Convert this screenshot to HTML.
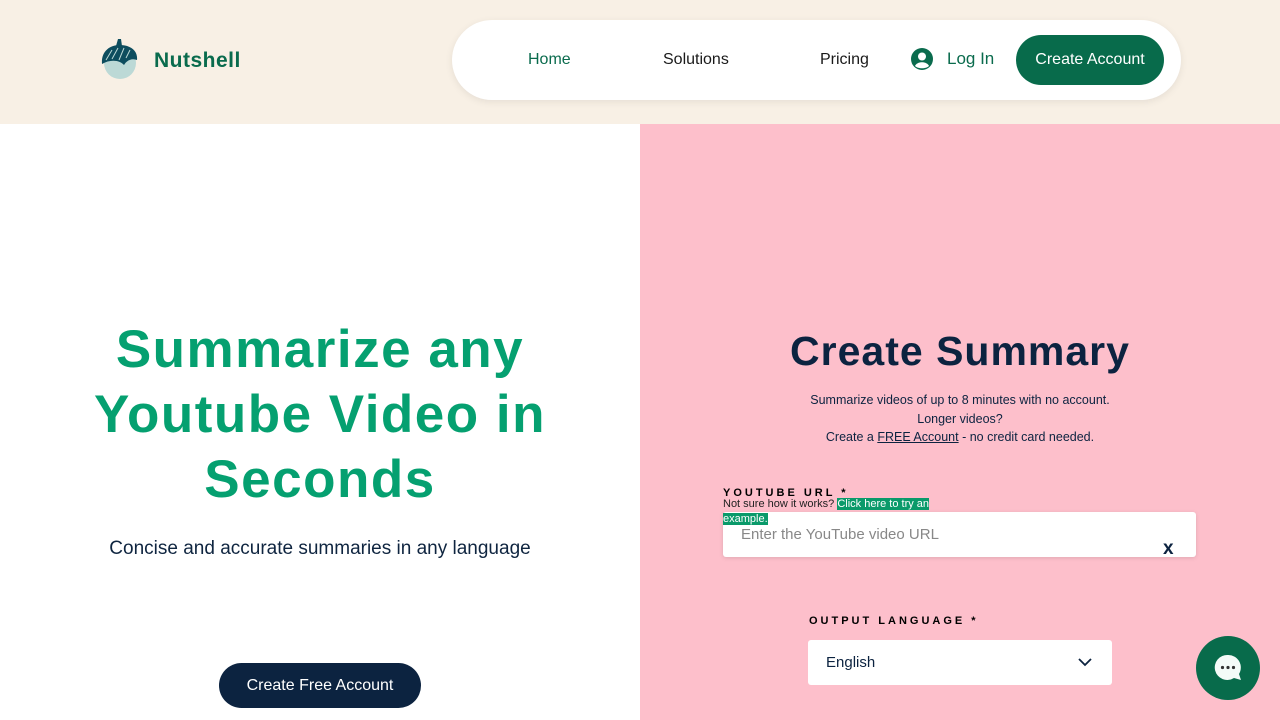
<!DOCTYPE html>
<html><head><meta charset="utf-8"><style>
*{margin:0;padding:0;box-sizing:border-box}
body{width:1280px;height:720px;overflow:hidden;font-family:"Liberation Sans",sans-serif;position:relative;background:#fff}
.hdr{position:absolute;left:0;top:0;width:1280px;height:124px;background:#f8f0e5}
.nav{position:absolute;left:452px;top:20px;width:729px;height:80px;background:#fff;border-radius:40px;box-shadow:0 2px 8px rgba(0,0,0,.08)}
.a{position:absolute;font-size:16px;color:#1a1a1a}
.right{position:absolute;left:640px;top:124px;width:640px;height:596px;background:#fdbfcb}
.h1{position:absolute;left:20px;width:600px;text-align:center;top:317px;font-size:53px;line-height:65px;font-weight:bold;color:#05a070;letter-spacing:1.5px}
</style></head><body>
<div class="hdr">
<svg style="position:absolute;left:100px;top:38px" width="40" height="42" viewBox="0 0 40 42"><circle cx="20" cy="25" r="16" fill="#bcd9d6"/><path d="M2 26 C1 14 9 7 20 7 C31 7 38 13 37 22 C32 20 27 22 24 27 C20 22 10 21 2 26Z" fill="#0d4d5e"/><path d="M16 8 L18 1 L21 1 L22 8Z" fill="#0d4d5e"/><path d="M12 12 L6 22 M18 10 L12 21 M24 10 L19 22 M30 12 L26 20" stroke="#bcd9d6" stroke-width="1"/></svg>
<div style="position:absolute;left:154px;top:49px;font-size:21px;font-weight:bold;color:#0a6b4d;letter-spacing:.5px">Nutshell</div>
<div class="nav">
<div class="a" style="left:76px;top:31px;color:#0a6b4d">Home</div>
<div class="a" style="left:211px;top:31px">Solutions</div>
<div class="a" style="left:368px;top:31px">Pricing</div>
<svg style="position:absolute;left:459px;top:28px" width="22" height="22" viewBox="0 0 22 22"><circle cx="11" cy="11" r="11" fill="#0a6b4d"/><circle cx="11" cy="8.5" r="4" fill="#fff"/><path d="M4 18 C6 13 16 13 18 18 C15 21 7 21 4 18Z" fill="#fff"/></svg>
<div class="a" style="left:495px;top:29px;font-size:17px;color:#0a6b4d">Log In</div>
<div style="position:absolute;left:564px;top:15px;width:148px;height:50px;border-radius:25px;background:#086b4b;color:#fff;font-size:16px;text-align:center;line-height:50px">Create Account</div>
</div></div>
<div class="h1">Summarize any<br>Youtube Video in<br>Seconds</div>
<div style="position:absolute;left:20px;width:600px;top:538px;text-align:center;font-size:19px;color:#0f2540">Concise and accurate summaries in any language</div>
<div style="position:absolute;left:219px;top:663px;width:202px;height:45px;border-radius:23px;background:#0c2340;color:#fff;font-size:16px;text-align:center;line-height:45px">Create Free Account</div>
<div class="right">
<div style="position:absolute;left:0;width:640px;top:204px;text-align:center;font-size:41px;font-weight:bold;color:#0c2340;letter-spacing:1px">Create Summary</div>
<div style="position:absolute;left:0;width:640px;top:267px;text-align:center;font-size:12.5px;line-height:18.5px;color:#0c2340">Summarize videos of up to 8 minutes with no account.<br>Longer videos?<br>Create a <u>FREE Account</u> - no credit card needed.</div>
<div style="position:absolute;left:83px;top:363px;font-size:11px;font-weight:bold;letter-spacing:3px;color:#000">YOUTUBE URL *</div>
<div style="position:absolute;left:83px;top:388px;width:473px;height:45px;background:#fff;border-radius:3px;box-shadow:0 1px 4px rgba(0,0,0,.12)">
<div style="position:absolute;left:18px;top:14px;font-size:15px;color:#888">Enter the YouTube video URL</div>
<div style="position:absolute;left:440px;top:26px;font-size:19px;font-weight:bold;color:#0c2340">x</div></div>
<div style="position:absolute;left:83px;top:373px;width:220px;font-size:11px;line-height:15px;color:#222">Not sure how it works? <span style="background:#0a9a6a;color:#fff">Click here to try an example.</span></div>
<div style="position:absolute;left:169px;top:491px;font-size:11px;font-weight:bold;letter-spacing:3px;color:#000">OUTPUT LANGUAGE *</div>
<div style="position:absolute;left:168px;top:516px;width:304px;height:45px;background:#fff;border-radius:3px">
<div style="position:absolute;left:18px;top:14px;font-size:15px;color:#0c2340">English</div>
<svg style="position:absolute;left:270px;top:17px" width="14" height="10"><path d="M1 2 L7 8 L13 2" stroke="#0c2340" stroke-width="1.8" fill="none"/></svg></div>
<div style="position:absolute;left:556px;top:512px;width:64px;height:64px;border-radius:50%;background:#086b4b">
<svg style="position:absolute;left:17px;top:17px" width="32" height="30" viewBox="0 0 32 30"><path d="M15 2 A12.5 12.5 0 1 0 21 25 L28 27 L26 21 A12.5 12.5 0 0 0 15 2Z" fill="#f4fbf8"/><circle cx="9.5" cy="14.5" r="1.6" fill="#333"/><circle cx="15" cy="14.5" r="1.6" fill="#333"/><circle cx="20.5" cy="14.5" r="1.6" fill="#333"/></svg></div>
</div>
</body></html>
